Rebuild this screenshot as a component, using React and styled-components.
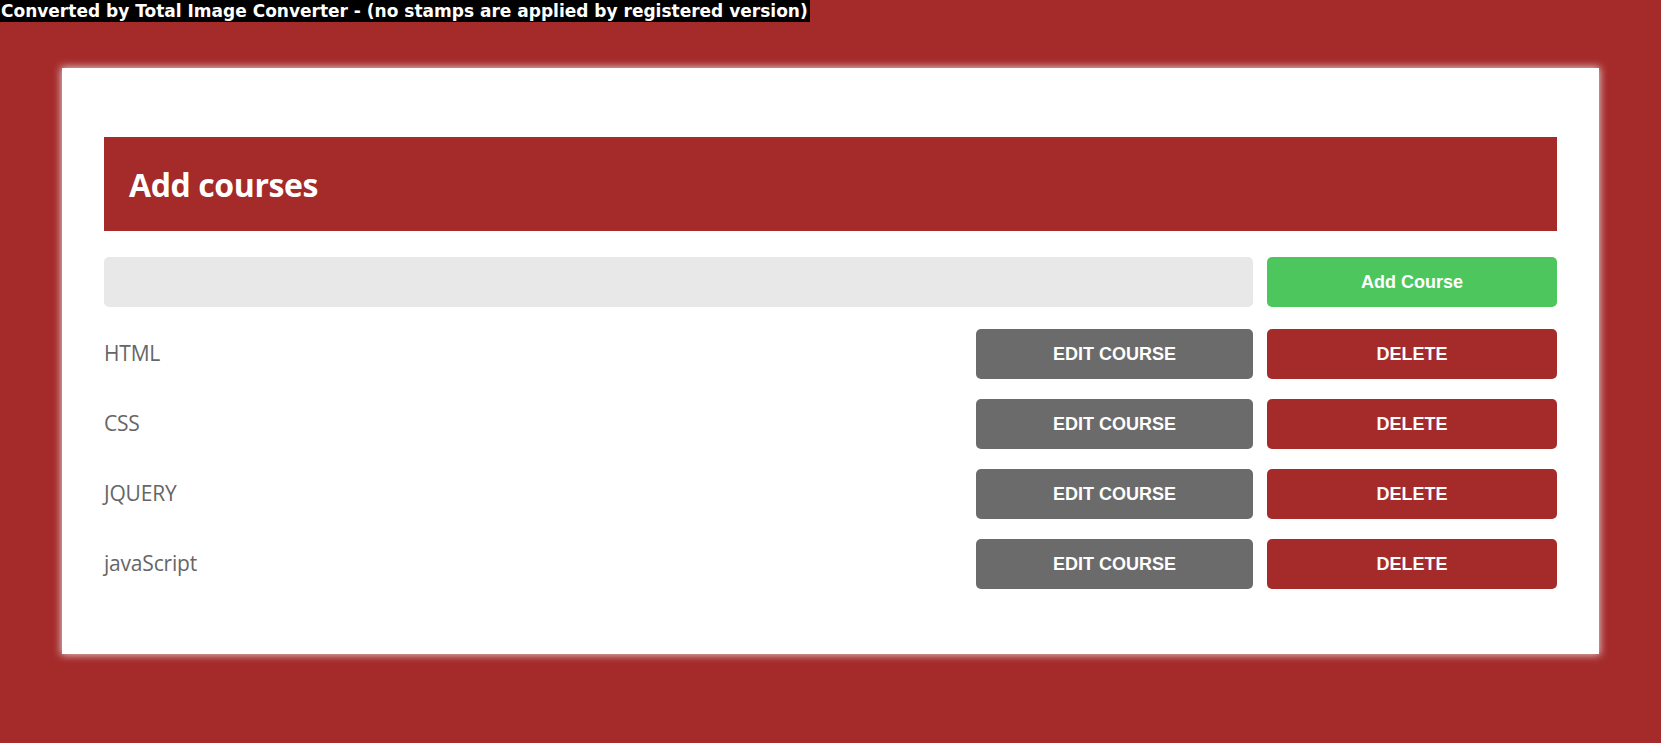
import React, { useState } from "react";
import styled, { createGlobalStyle } from "styled-components";

const GlobalStyle = createGlobalStyle`
  html, body {
    margin: 0;
    padding: 0;
    background: #a52a2a;
    min-height: 743px;
  }
  * {
    box-sizing: border-box;
  }
`;

const initialCourses = ["HTML", "CSS", "JQUERY", "javaScript"];

const App = () => {
  const [courses, setCourses] = useState(initialCourses);
  const [value, setValue] = useState("");

  const addCourse = () => {
    if (!value.trim()) return;
    setCourses([...courses, value.trim()]);
    setValue("");
  };

  const deleteCourse = (index) => {
    setCourses(courses.filter((_, i) => i !== index));
  };

  return (
    <Page>
      <GlobalStyle />
      <Stamp>
        Converted by Total Image Converter - (no stamps are applied by registered version)
      </Stamp>
      <Card>
        <Header>
          <h1>Add courses</h1>
        </Header>
        <Grid>
          <Input value={value} onChange={(e) => setValue(e.target.value)} />
          <Button $variant="add" onClick={addCourse}>
            Add Course
          </Button>
          {courses.map((course, i) => (
            <React.Fragment key={course + i}>
              <CourseName>{course}</CourseName>
              <Button $variant="edit">EDIT COURSE</Button>
              <Button $variant="delete" onClick={() => deleteCourse(i)}>
                DELETE
              </Button>
            </React.Fragment>
          ))}
        </Grid>
      </Card>
    </Page>
  );
};

const Page = styled.div`
  min-height: 743px;
  background: #a52a2a;
  overflow: hidden;
`;

const Stamp = styled.div`
  width: fit-content;
  height: 22px;
  line-height: 22px;
  padding: 0 2px 0 1px;
  background: #000;
  color: #fff;
  font-family: "DejaVu Sans", sans-serif;
  font-weight: bold;
  font-size: 17px;
  letter-spacing: 0;
  white-space: nowrap;
`;

const Card = styled.div`
  width: 1537px;
  margin: 46px auto 0;
  padding: 69px 42px 65px;
  background: #fff;
  box-shadow: 0 0 8px 1px rgba(230, 220, 220, 0.9);
`;

const Header = styled.div`
  height: 94px;
  display: flex;
  align-items: center;
  padding-left: 25px;
  background: #a52a2a;

  h1 {
    margin: 0;
    color: #fff;
    font-family: "Open Sans", sans-serif;
    font-weight: 700;
    font-size: 32px;
    letter-spacing: -0.4px;
  }
`;

const Grid = styled.div`
  display: grid;
  grid-template-columns: 1fr 277px 290px;
  column-gap: 14px;
  row-gap: 20px;
  margin-top: 26px;
  align-items: center;
`;

const Input = styled.input`
  grid-column: 1 / 3;
  height: 50px;
  margin-bottom: 2px;
  border: none;
  border-radius: 5px;
  background: #e8e8e8;
  padding: 0 15px;
  font-size: 18px;
  font-family: "Open Sans", sans-serif;
  outline: none;
`;

const CourseName = styled.div`
  margin-top: -3px;
  font-family: "Open Sans", sans-serif;
  font-size: 21px;
  color: #666;
  letter-spacing: -0.2px;
`;

const colors = {
  add: "#4dc65d",
  edit: "#6b6b6b",
  delete: "#a52a2a",
};

const Button = styled.button`
  height: 50px;
  border: none;
  border-radius: 5px;
  background: ${(p) => colors[p.$variant]};
  color: #fff;
  font-family: "Liberation Sans", Arial, sans-serif;
  font-weight: bold;
  font-size: 18px;
  cursor: pointer;
  margin-bottom: ${(p) => (p.$variant === "add" ? "2px" : "0")};
`;

export default App;
